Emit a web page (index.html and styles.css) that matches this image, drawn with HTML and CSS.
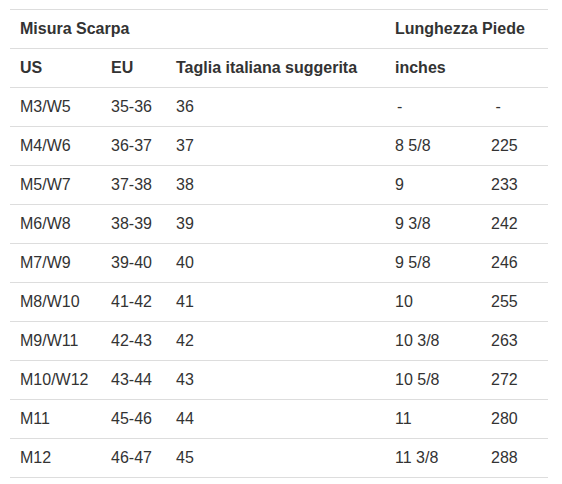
FILE: index.html
```html
<!DOCTYPE html>
<html lang="it">
<head>
<meta charset="utf-8">
<link rel="stylesheet" href="styles.css">
</head>
<body>
<div class="wrap">
<table class="size-table">
  <colgroup>
    <col class="c-us"><col class="c-eu"><col class="c-it"><col class="c-in"><col class="c-mm">
  </colgroup>
  <thead>
    <tr><th colspan="3">Misura Scarpa</th><th colspan="2">Lunghezza Piede</th></tr>
    <tr><th>US</th><th>EU</th><th>Taglia italiana suggerita</th><th>inches</th><th></th></tr>
  </thead>
  <tbody>
    <tr><td>M3/W5</td><td>35-36</td><td>36</td><td class="dash">-</td><td>&nbsp;-</td></tr>
    <tr><td>M4/W6</td><td>36-37</td><td>37</td><td>8 5/8</td><td>225</td></tr>
    <tr><td>M5/W7</td><td>37-38</td><td>38</td><td>9</td><td>233</td></tr>
    <tr><td>M6/W8</td><td>38-39</td><td>39</td><td>9 3/8</td><td>242</td></tr>
    <tr><td>M7/W9</td><td>39-40</td><td>40</td><td>9 5/8</td><td>246</td></tr>
    <tr><td>M8/W10</td><td>41-42</td><td>41</td><td>10</td><td>255</td></tr>
    <tr><td>M9/W11</td><td>42-43</td><td>42</td><td>10 3/8</td><td>263</td></tr>
    <tr><td>M10/W12</td><td>43-44</td><td>43</td><td>10 5/8</td><td>272</td></tr>
    <tr><td>M11</td><td>45-46</td><td>44</td><td>11</td><td>280</td></tr>
    <tr><td>M12</td><td>46-47</td><td>45</td><td>11 3/8</td><td>288</td></tr>
  </tbody>
</table>
</div>
</body>
</html>
```
FILE: styles.css
```css
html, body {
  margin: 0;
  padding: 0;
  background: #fff;
}
.wrap {
  padding: 9px 14px 0 10px;
}
.size-table {
  width: 538px;
  border-collapse: collapse;
  table-layout: fixed;
  font-family: "Liberation Sans", Arial, sans-serif;
  font-size: 16px;
  color: #333;
}
.c-us { width: 91px; }
.c-eu { width: 65px; }
.c-it { width: 219px; }
.c-in { width: 96px; }
.c-mm { width: 67px; }
.size-table th,
.size-table td {
  border-top: 1px solid #ddd;
  padding: 8px 0 8px 10px;
  line-height: 22px;
  text-align: left;
  white-space: nowrap;
  vertical-align: middle;
}
.size-table th {
  font-weight: bold;
}
.size-table td.dash {
  padding-left: 12px;
}
.size-table tbody tr:last-child td {
  border-bottom: 1px solid #ddd;
}
```
